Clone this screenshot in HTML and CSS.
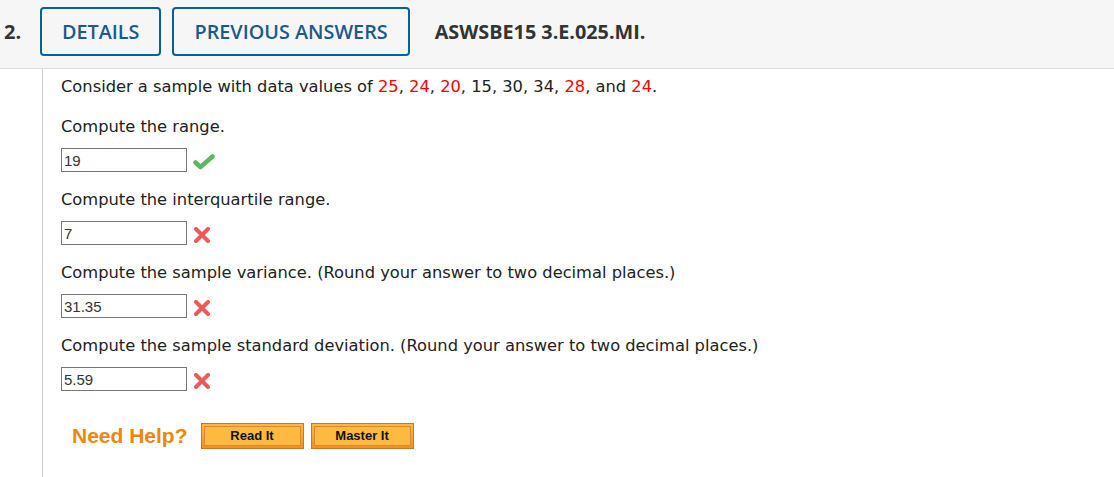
FILE: index.html
```html
<!DOCTYPE html>
<html lang="en">
<head>
<meta charset="UTF-8">
<meta name="viewport" content="width=device-width, initial-scale=1.0">
<title>Question 2</title>
<link rel="stylesheet" href="styles.css">
</head>
<body>

<div class="question">
    <div class="q-header">
        <span class="q-number">2.</span>
        <button type="button" class="tab-btn">DETAILS</button>
        <button type="button" class="tab-btn">PREVIOUS ANSWERS</button>
        <span class="q-ref">ASWSBE15 3.E.025.MI.</span>
    </div>

    <div class="q-body">
        <p class="prompt intro">Consider a sample with data values of <span class="red">25</span>, <span class="red">24</span>, <span class="red">20</span>, 15, 30, 34, <span class="red">28</span>, and <span class="red">24</span>.</p>

        <p class="prompt">Compute the range.</p>
        <div class="answer-row">
            <input type="text" class="answer" value="19" readonly>
            <svg class="mark" width="22" height="16" viewBox="0 0 22 16">
                <path d="M2.5 8.5 L7.5 13 L19.5 2.5" fill="none" stroke="#5cb85c" stroke-width="4.5" stroke-linecap="round" stroke-linejoin="round"/>
            </svg>
        </div>

        <p class="prompt">Compute the interquartile range.</p>
        <div class="answer-row">
            <input type="text" class="answer" value="7" readonly>
            <svg class="mark" width="22" height="16" viewBox="0 0 22 16">
                <path d="M3 2 L15 14 M15 2 L3 14" fill="none" stroke="#ec5a5a" stroke-width="4" stroke-linecap="round"/>
            </svg>
        </div>

        <p class="prompt">Compute the sample variance. (Round your answer to two decimal places.)</p>
        <div class="answer-row">
            <input type="text" class="answer" value="31.35" readonly>
            <svg class="mark" width="22" height="16" viewBox="0 0 22 16">
                <path d="M3 2 L15 14 M15 2 L3 14" fill="none" stroke="#ec5a5a" stroke-width="4" stroke-linecap="round"/>
            </svg>
        </div>

        <p class="prompt">Compute the sample standard deviation. (Round your answer to two decimal places.)</p>
        <div class="answer-row">
            <input type="text" class="answer" value="5.59" readonly>
            <svg class="mark" width="22" height="16" viewBox="0 0 22 16">
                <path d="M3 2 L15 14 M15 2 L3 14" fill="none" stroke="#ec5a5a" stroke-width="4" stroke-linecap="round"/>
            </svg>
        </div>

        <div class="help">
            <span class="help-label">Need Help?</span>
            <button type="button" class="help-btn"><span>Read It</span></button>
            <button type="button" class="help-btn"><span>Master It</span></button>
        </div>
    </div>
</div>

</body>
</html>
```

FILE: styles.css
```css
body {
    margin: 0;
    padding: 0;
    background-color: #fff;
    font-family: "DejaVu Sans", Verdana, sans-serif;
    color: #222;
}

.q-header {
    display: flex;
    align-items: flex-start;
    height: 61px;
    padding: 7px 0 0 4px;
    background-color: #f6f6f6;
    border-bottom: 1px solid #ddd;
}

.q-number {
    width: 36px;
    line-height: 49px;
    font-family: "Open Sans", sans-serif;
    font-weight: 700;
    font-size: 20px;
    color: #333;
}

.tab-btn {
    height: 49px;
    margin-right: 11px;
    padding: 0 20px;
    background-color: #f6f6f6;
    border: 2px solid #00639e;
    border-radius: 4px;
    font-family: "Open Sans", sans-serif;
    font-weight: 600;
    font-size: 19.8px;
    color: #1a5a8c;
}

.q-ref {
    margin-left: 14px;
    line-height: 49px;
    font-family: "Open Sans", sans-serif;
    font-weight: 700;
    font-size: 19.8px;
    color: #333;
}

.q-body {
    margin-left: 42px;
    padding: 6px 0 0 18px;
    height: 403px;
    border-left: 1px solid #ccc;
}

.prompt {
    margin: 0;
    font-size: 16.3px;
    line-height: 24px;
    padding: 0 0 9px;
}

.prompt.intro {
    padding-bottom: 16px;
}

.red {
    color: #f00;
}

.answer-row {
    display: flex;
    align-items: center;
    height: 24px;
    margin-bottom: 16px;
}

.answer {
    box-sizing: border-box;
    width: 126px;
    height: 24px;
    padding: 1px 2px;
    border: 1px solid #767676;
    border-radius: 0;
    font-family: "Liberation Sans", Arial, sans-serif;
    font-size: 15px;
    color: #333;
    outline: none;
}

.mark {
    margin-left: 6px;
    margin-top: 4px;
}

.help {
    display: flex;
    align-items: center;
    margin-top: 32px;
    padding-left: 11px;
}

.help-label {
    margin-right: 13px;
    font-family: "Liberation Sans", Arial, sans-serif;
    font-weight: 700;
    font-size: 21px;
    color: #f0860a;
}

.help-btn {
    width: 103px;
    height: 26px;
    margin-right: 7px;
    padding: 2px;
    background: linear-gradient(#ffb848, #f2911c);
    border: 1px solid #c8762a;
    border-radius: 0;
    cursor: pointer;
}

.help-btn span {
    display: block;
    height: 18px;
    line-height: 18px;
    background-color: #fdb940;
    border: 1px solid #d88a30;
    font-family: "Liberation Sans", Arial, sans-serif;
    font-weight: 700;
    font-size: 13px;
    color: #111;
}
```
